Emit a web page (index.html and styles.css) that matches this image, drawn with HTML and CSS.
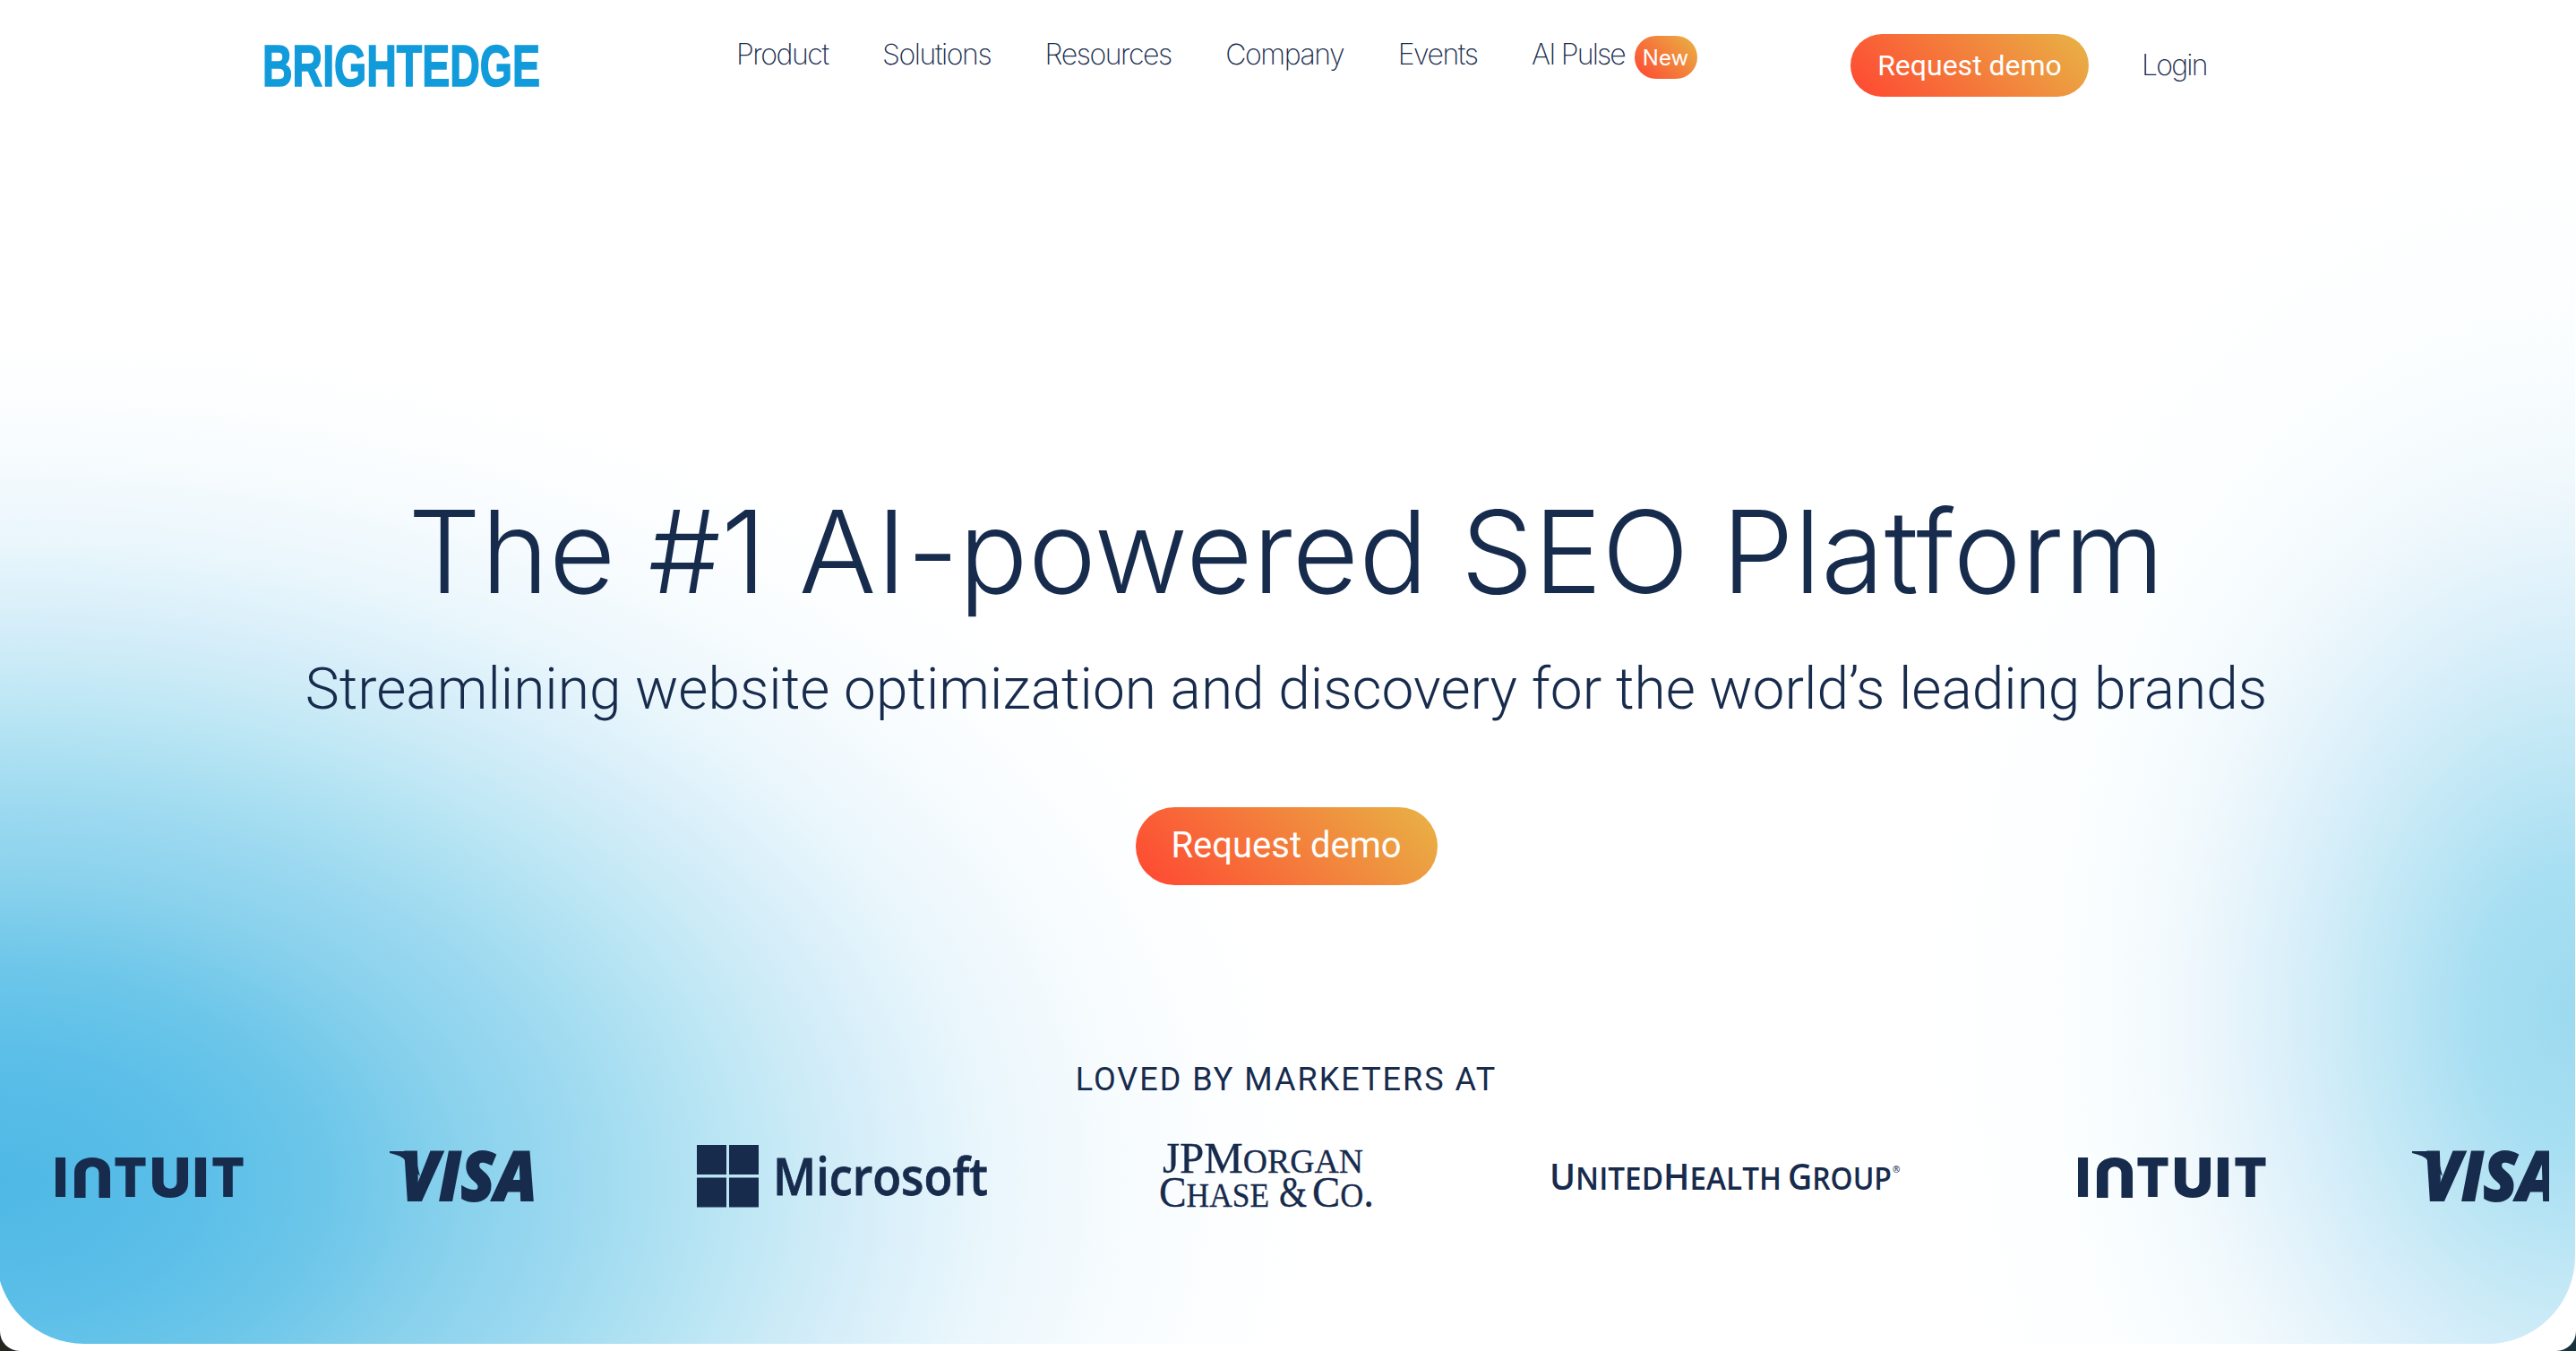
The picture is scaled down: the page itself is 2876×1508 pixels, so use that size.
FILE: index.html
```html
<!DOCTYPE html>
<html lang="en">
<head>
<meta charset="utf-8">
<title>BrightEdge</title>
<link rel="stylesheet" href="styles.css">
</head>
<body>
<svg class="defs" width="0" height="0" aria-hidden="true">
  <defs>
    <symbol id="intuit" viewBox="0 0 210 50">
      <g class="intuit-type">
        <text x="-4" y="47.500" textLength="18" lengthAdjust="spacingAndGlyphs">I</text>
        <text x="-64" y="-4.500" transform="rotate(180)" textLength="46" lengthAdjust="spacingAndGlyphs">U</text>
        <text x="65" y="47.500" textLength="37" lengthAdjust="spacingAndGlyphs">T</text>
        <text x="105" y="47.500" textLength="46" lengthAdjust="spacingAndGlyphs">U</text>
        <text x="153" y="47.500" textLength="18" lengthAdjust="spacingAndGlyphs">I</text>
        <text x="174" y="47.500" textLength="37" lengthAdjust="spacingAndGlyphs">T</text>
      </g>
    </symbol>
    <symbol id="visa" viewBox="0 0 164 60">
      <path d="M0 2H23Q27 2 28 6L34 30L17 12Q14 7 0 4Z"/>
      <text class="visa-type" x="12" y="56.500" textLength="152.500" lengthAdjust="spacingAndGlyphs">VISA</text>
    </symbol>
  </defs>
</svg>
<div class="page">
  <header class="header">
    <a class="brand"><svg width="320" height="60" viewBox="0 0 320 60"><text x="1" y="53" textLength="310" lengthAdjust="spacingAndGlyphs">BRIGHTEDGE</text></svg></a>
    <nav class="nav">
      <a>Product</a><a>Solutions</a><a>Resources</a><a>Company</a><a>Events</a><a>AI Pulse</a>
      <span class="badge">New</span>
    </nav>
    <a class="button">Request demo</a>
    <a class="login">Login</a>
  </header>
  <main class="hero">
    <h1>The #1 AI-powered SEO Platform</h1>
    <p class="lead">Streamlining website optimization and discovery for the world’s leading brands</p>
    <a class="button large">Request demo</a>
    <p class="caption">LOVED BY MARKETERS AT</p>
    <div class="logos">
      <svg class="logo intuit" viewBox="0 0 210 50"><use href="#intuit"/></svg>
      <svg class="logo visa" viewBox="0 0 164 60"><use href="#visa"/></svg>
      <svg class="logo microsoft" viewBox="0 0 326 80">
        <path d="M0 5h33v33H0zM36 5h33v33H36zM0 41.500h33v33H0zM36 41.500h33v33H36z"/>
        <text x="85" y="61" textLength="240" lengthAdjust="spacingAndGlyphs">Microsoft</text>
      </svg>
      <svg class="logo jpmorgan" viewBox="0 0 240 80">
        <text x="4" y="36" textLength="224" lengthAdjust="spacingAndGlyphs">JPM<tspan class="small">ORGAN</tspan></text>
        <text x="0" y="74" textLength="123" lengthAdjust="spacingAndGlyphs">C<tspan class="small">HASE</tspan></text>
        <text x="134" y="74" textLength="31" lengthAdjust="spacingAndGlyphs">&amp;</text>
        <text x="171" y="74" textLength="69" lengthAdjust="spacingAndGlyphs">C<tspan class="small">O</tspan>.</text>
      </svg>
      <svg class="logo united" viewBox="0 0 392 50">
        <text x="-3" y="39.500" textLength="259" lengthAdjust="spacingAndGlyphs">U<tspan class="small">NITED</tspan>H<tspan class="small">EALTH</tspan></text>
        <text x="263" y="39.500" textLength="116" lengthAdjust="spacingAndGlyphs">G<tspan class="small">ROUP</tspan></text>
        <text class="mark" x="380" y="21">®</text>
      </svg>
      <svg class="logo intuit second" viewBox="0 0 210 50"><use href="#intuit"/></svg>
      <svg class="logo visa" viewBox="0 0 164 60"><use href="#visa"/></svg>
    </div>
  </main>
</div>
</body>
</html>
```
FILE: styles.css
```css
* { box-sizing: border-box; }
body {
  margin: 0;
  background: linear-gradient(90deg, #25241f 50%, #16323d 50%);
  color: #172b4d;
  font-family: Inter, "Liberation Sans", sans-serif;
}
.defs { position: absolute; }
.page {
  width: 2876px;
  height: 1508px;
  overflow: hidden;
  background: #fff;
  border-radius: 0 0 22px 22px;
  display: flex;
  flex-direction: column;
}
.header {
  height: 130px;
  flex: none;
  display: flex;
  align-items: flex-start;
  position: relative;
  z-index: 1;
}
.brand { margin: 43px 0 0 292px; width: 530px; height: 60px; }
.brand text {
  font: bold 64px "Liberation Sans Narrow", "Liberation Sans", sans-serif;
  fill: #129bdb;
  stroke: #129bdb;
  stroke-width: 1.6px;
}
.nav {
  width: 1244px;
  display: flex;
  margin-top: 41px;
  font-size: 32px;
  line-height: 40px;
  font-weight: 200;
  letter-spacing: -1.45px;
  white-space: nowrap;
}
.nav a { margin-right: 60.5px; }
.nav a:last-of-type { margin-right: 10.5px; letter-spacing: -1.8px; }
.badge {
  width: 70px;
  height: 48px;
  margin-top: -1px;
  border-radius: 24px;
  text-align: center;
  font-size: 24px;
  line-height: 49px;
  font-weight: 400;
  letter-spacing: 0;
  color: #fff;
  background: linear-gradient(45deg, #ff4632, #e8b445);
}
.button {
  width: 266px;
  height: 70px;
  margin-top: 38px;
  border-radius: 44px;
  text-align: center;
  font: 400 32px/70px Roboto, sans-serif;
  letter-spacing: 0;
  color: #fff;
  background: linear-gradient(45deg, #ff4632, #e8b445);
}
.login {
  margin: 53px 0 0 59px;
  font-size: 32px;
  line-height: 40px;
  font-weight: 200;
  letter-spacing: -1.8px;
}
.hero {
  height: 1500px;
  flex: none;
  margin: -130px 1px 0 -4px;
  padding: 520px 3px 0 4px;
  border-radius: 0 0 98px 98px;
  overflow: hidden;
  display: flex;
  flex-direction: column;
  align-items: center;
  background:
    radial-gradient(ellipse 1470px 950px at 0 1320px, #4fb8e5 0, #5abee8 14%, #6cc6e9 25%, #8bd2ed 36%, #9cd9f0 44%, #aee1f2 51%, #c2e8f5 58%, #d6eef9 66%, #e9f6fc 75%, #f6fbfe 85%, #fcfeff 93%, rgba(255,255,255,0) 100%),
    radial-gradient(ellipse 730px 990px at 100% 1130px, #9cdaf0 0, #a8dff2 16%, #c0e7f5 29%, #d5eef9 41%, #e6f4fb 52%, #f3fafd 63%, #fbfeff 77%, rgba(255,255,255,0) 100%),
    #fff;
}
h1 {
  margin: 0;
  font-size: 128px;
  line-height: 192px;
  font-weight: 300;
  letter-spacing: 0.3px;
  white-space: nowrap;
}
.lead {
  margin: 10px 0 0;
  font: 300 64px/96px Roboto, sans-serif;
  white-space: nowrap;
}
.button.large {
  width: 337px;
  height: 87px;
  margin-top: 83px;
  font-size: 40px;
  line-height: 85px;
}
.caption {
  margin: 192px 0 0;
  font: 400 36px/50px Roboto, sans-serif;
  letter-spacing: 2px;
  white-space: nowrap;
}
.logos {
  align-self: flex-start;
  width: 2816px;
  height: 90px;
  margin: 38px 0 0 30px;
  padding-left: 32px;
  overflow: hidden;
  display: flex;
  align-items: center;
}
.logo { flex: none; overflow: visible; fill: #172b4d; }
.intuit { width: 210px; height: 50px; margin-right: 163px; }
.intuit-type { font: 900 60px Inter, sans-serif; }
.visa { width: 164px; height: 60px; margin-right: 179px; }
.visa-type { font: italic 800 76px "Open Sans", sans-serif; stroke: #172b4d; stroke-width: 1.8px; }
.microsoft { width: 326px; height: 80px; margin-right: 190px; }
.microsoft text { font: 600 58px "Open Sans", sans-serif; stroke: #172b4d; stroke-width: 0.8px; }
.jpmorgan { width: 240px; height: 80px; margin-right: 199px; }
.jpmorgan text { font: 400 48px "Liberation Serif", serif; stroke: #172b4d; stroke-width: 0.3px; }
.jpmorgan .small { font-size: 37px; }
.united { width: 392px; height: 50px; margin-right: 195px; }
.united text { font: 600 40px "Open Sans", sans-serif; }
.united .small { font-size: 34px; }
.united .mark { font-size: 10px; }
```
